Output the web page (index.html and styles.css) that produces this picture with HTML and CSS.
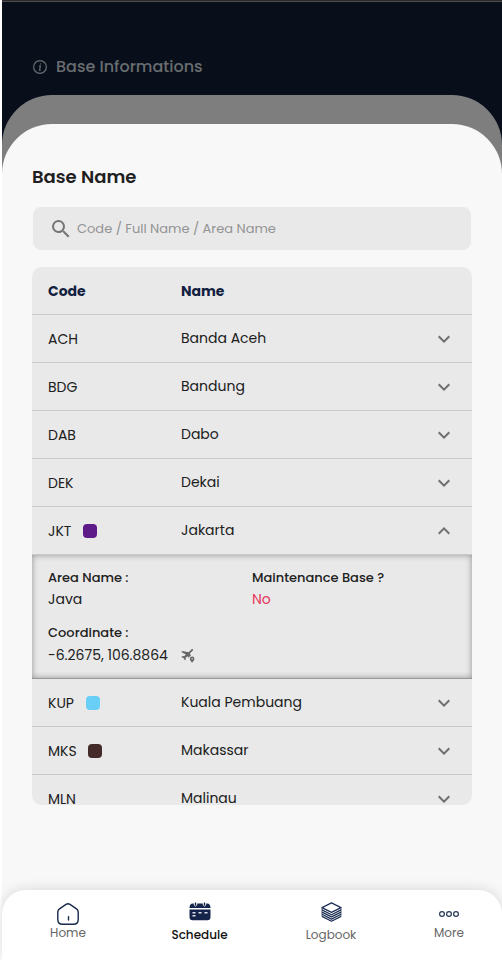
FILE: index.html
```html
<!DOCTYPE html>
<html lang="en">
<head>
<meta charset="utf-8">
<title>Base Informations</title>
<link rel="stylesheet" href="styles.css">
</head>
<body>
<svg class="defs" width="0" height="0">
  <symbol id="down" viewBox="0 0 24 24"><path d="M16.59 8.59L12 13.17 7.41 8.59 6 10l6 6 6-6z"/></symbol>
  <symbol id="up" viewBox="0 0 24 24"><path d="M12 8l-6 6 1.41 1.41L12 10.83l4.59 4.58L18 14z"/></symbol>
</svg>
<div class="app">
  <header class="top">
    <svg class="info" viewBox="0 0 16 16"><circle cx="8" cy="8" r="6.4"/><path d="M7 7.1h1.4L7.5 11.2h1.2M8.6 4.6v.9"/></svg>
    <span class="top-title">Base Informations</span>
  </header>
  <main class="back-sheet">
    <section class="sheet">
      <h1>Base Name</h1>
      <div class="search">
        <svg viewBox="0 0 24 24"><path d="M15.5 14h-.79l-.28-.27A6.471 6.471 0 0 0 16 9.5 6.5 6.5 0 1 0 9.5 16c1.61 0 3.09-.59 4.23-1.57l.27.28v.79l5 4.99L20.49 19l-4.99-5zm-6 0C7.01 14 5 11.99 5 9.5S7.01 5 9.5 5 14 7.01 14 9.5 11.99 14 9.5 14z"/></svg>
        <span class="placeholder">Code / Full Name / Area Name</span>
      </div>
      <div class="table">
        <div class="row head"><div class="code"><span>Code</span></div><div class="name"><span>Name</span></div></div>
        <div class="row"><div class="code"><span>ACH</span></div><div class="name"><span>Banda Aceh</span></div><svg class="chev"><use href="#down"/></svg></div>
        <div class="row"><div class="code"><span>BDG</span></div><div class="name"><span>Bandung</span></div><svg class="chev"><use href="#down"/></svg></div>
        <div class="row"><div class="code"><span>DAB</span></div><div class="name"><span>Dabo</span></div><svg class="chev"><use href="#down"/></svg></div>
        <div class="row"><div class="code"><span>DEK</span></div><div class="name"><span>Dekai</span></div><svg class="chev"><use href="#down"/></svg></div>
        <div class="row"><div class="code jkt"><span>JKT</span><i class="chip purple"></i></div><div class="name"><span>Jakarta</span></div><svg class="chev"><use href="#up"/></svg></div>
        <div class="detail">
          <div class="field area"><b>Area Name :</b><span>Java</span></div>
          <div class="field maint"><b>Maintenance Base ?</b><span class="no">No</span></div>
          <div class="field coord"><b>Coordinate :</b>
            <div class="coord-line"><span>-6.2675, 106.8864</span>
              <svg class="plane" viewBox="0 0 14 14"><path d="M10.400 .5c.5-.5 1.200-.6 1.500-.3s.2 1-.3 1.500L9 4.300l.8 2.600C8.500 7.100 8 7.800 7.900 8.900L6.500 7.200 4.600 8.800l.2 1.800-.8.800-1.300-2.200L.5 7.900l.8-.8 1.800.2L4.900 5.400.3 3.100l1-1 6.300 1.200z"/><path fill-rule="evenodd" d="M11.100 7.400a2.300 2.300 0 0 1 2.300 2.300c0 1.600-2.300 4-2.300 4s-2.300-2.400-2.300-4a2.300 2.300 0 0 1 2.300-2.300zm0 1.600a.7.7 0 1 0 0 1.400.7.7 0 0 0 0-1.400z"/></svg>
            </div>
          </div>
        </div>
        <div class="row"><div class="code kup"><span>KUP</span><i class="chip blue"></i></div><div class="name"><span>Kuala Pembuang</span></div><svg class="chev"><use href="#down"/></svg></div>
        <div class="row"><div class="code mks"><span>MKS</span><i class="chip brown"></i></div><div class="name"><span>Makassar</span></div><svg class="chev"><use href="#down"/></svg></div>
        <div class="row"><div class="code"><span>MLN</span></div><div class="name"><span>Malinau</span></div><svg class="chev"><use href="#down"/></svg></div>
      </div>
    </section>
  </main>
  <nav class="nav">
    <div class="tab home">
      <svg width="22" height="22" viewBox="0 0 22 22" fill="none" stroke="#17294d" stroke-width="1.4" stroke-linecap="round"><path d="M9 1.300Q11 .2 13 1.300L19.200 5.600Q21.200 7 21.200 9V16.500Q21.200 21.300 16.500 21.300H5.500Q.8 21.300 .8 16.500V9Q.8 7 2.800 5.600Z"/><path d="M11.500 13.800v3.200"/></svg>
      <span>Home</span>
    </div>
    <div class="tab schedule">
      <svg width="22" height="19" viewBox="0 0 22 19"><path fill="#14244a" d="M3.500 1.500h15q2.500 0 3 3.800v.7H.5v-.7q.5-3.800 3-3.800zM.5 7.500h21V15q0 3.200-3.200 3.200H3.700Q.5 18.200 .5 15z"/><g fill="none" stroke="#fff" stroke-width="1"><path d="M5.300 0v3.200q1.200 1.800 2.400 0V0M14.300 0v3.200q1.200 1.800 2.400 0V0"/></g><path stroke="#14244a" stroke-width="1.200" d="M6.500 .5v2.800M15.500 .5v2.800"/><path stroke="#dfe2e8" stroke-width="1.500" d="M3.500 10.700h3M9.500 10.700h3M15.500 10.700h3M3.500 13.700h3"/></svg>
      <span>Schedule</span>
    </div>
    <div class="tab logbook">
      <svg width="22" height="20" viewBox="0 0 22 20" fill="none" stroke="#1d2f54" stroke-width="1.200" stroke-linejoin="round"><path d="M11.500 .9L21 5.600 11.500 10.400 2 5.600z"/><path d="M2 7.900l9.500 4.800L21 7.900M2 10.100l9.500 4.800 9.500-4.800M2 12.300l9.500 4.800 9.500-4.800M2 14.400l9.500 4.800 9.500-4.800"/><path stroke-opacity=".6" d="M2 5.600v8.800M21 5.600v8.800"/></svg>
      <span>Logbook</span>
    </div>
    <div class="tab more">
      <svg width="20" height="6" viewBox="0 0 20 6" fill="none" stroke="#263858" stroke-width="1.200"><circle cx="3" cy="3" r="2.400"/><circle cx="10" cy="3" r="2.400"/><circle cx="17" cy="3" r="2.400"/></svg>
      <span>More</span>
    </div>
  </nav>
</div>
</body>
</html>
```
FILE: styles.css
```css
* { box-sizing: border-box; }
body { margin: 0; overflow: hidden; background: #fff; font-family: Poppins, Inter, "Liberation Sans", sans-serif; color: #202020; }
.defs { display: block; }
.app { margin-left: 2px; width: 500px; height: 960px; display: flex; flex-direction: column; background: #080f1b; }
.top { flex: none; height: 95px; border-top: 1px solid #2d2829; box-shadow: inset 0 1px #4c4b4d; padding: 54px 0 0 30px; display: flex; align-items: flex-start; }
.info { width: 16px; height: 16px; margin: 4px 8px 0 0; fill: none; stroke: #696d70; stroke-width: 1.2; }
.top-title { font-size: 16px; line-height: 24px; font-weight: 500; color: #696d70; }
.back-sheet { flex: 1; min-height: 0; margin-bottom: -70px; background: #7e7e7e; border-radius: 50px 50px 0 0; padding-top: 29px; }
.sheet { height: 836px; background: #f8f8f8; border-radius: 50px 50px 0 0; padding: 39px 30px 0; }
h1 { margin: 0; font-size: 18px; line-height: 27px; font-weight: 600; }
.search { height: 43px; margin: 17px 1px 17px; border-radius: 8px; background: #e9e9e9; display: flex; align-items: center; padding-left: 16px; }
.search svg { width: 24px; height: 24px; fill: #757575; margin-right: 4px; }
.placeholder { font-size: 13px; color: #939393; }
.table { height: 538px; overflow: hidden; border-radius: 10px; background: #e9e9e9; font-size: 14px; }
.row { height: 48px; border-bottom: 1px solid #c9c9c9; display: grid; grid-template-columns: 133px 1fr 24px; align-items: center; padding: 0 16px; line-height: 20px; }
.code { display: flex; align-items: center; padding-top: 1px; }
.name { padding-bottom: 1px; }
.head { font-weight: 700; color: #12213f; }
.head .code, .head .name { padding: 0; }
.chev { width: 24px; height: 24px; fill: #6f6f6f; }
.chip { width: 14px; height: 14px; border-radius: 4px; }
.jkt span { width: 35px; }
.kup span { width: 38px; }
.mks span { width: 40px; }
.purple { background: #5d1b8a; }
.blue { background: #69cff7; }
.brown { background: #452a2a; }
.detail { height: 124px; border-bottom: 1px solid #989898; box-shadow: inset 0 0 6px rgba(0,0,0,.38); padding: 12px 16px; display: grid; grid-template-columns: 204px 1fr; grid-template-rows: 55px 1fr; }
.field b { display: block; font-size: 13px; line-height: 21px; font-weight: 500; }
.field span { display: block; line-height: 23px; }
.field .no { color: #e7365c; }
.coord-line { display: flex; align-items: center; }
.coord-line span { width: 133px; line-height: 25px; }
.plane { width: 14px; height: 14px; fill: #666; }
.nav { flex: none; height: 70px; border-radius: 24px 24px 0 0; background: #fff; box-shadow: 0 0 14px rgba(0,0,0,.14); display: grid; grid-template-columns: 132px 131px 132px 104px; font-size: 12px; line-height: 18px; color: #666; position: relative; }
.tab { display: flex; flex-direction: column; align-items: center; }
.tab svg { flex: none; }
.home { padding-top: 13px; }
.home span { margin-top: -1px; }
.schedule { padding-top: 12px; color: #111; font-weight: 500; }
.schedule span { margin-top: 5px; }
.logbook { padding-top: 12px; }
.logbook span { margin-top: 4px; }
.more { padding-top: 21px; }
.more span { margin-top: 7px; }
```
